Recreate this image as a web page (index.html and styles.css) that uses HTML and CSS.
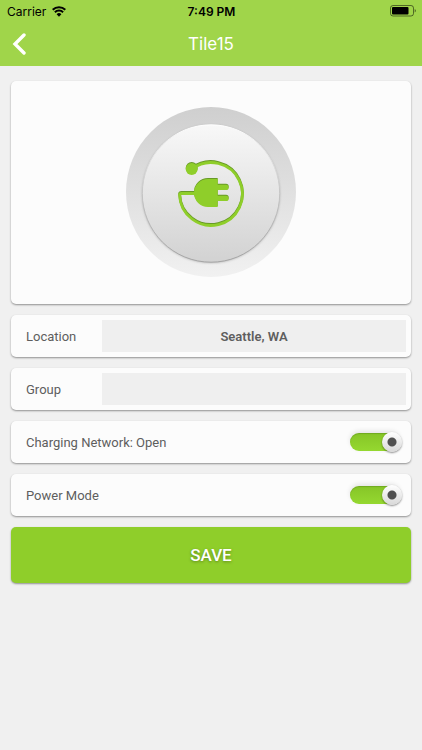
FILE: index.html
```html
<!DOCTYPE html>
<html lang="en">
<head>
<meta charset="utf-8">
<meta name="viewport" content="width=device-width, initial-scale=1">
<title>Tile15</title>
<link rel="stylesheet" href="styles.css">
</head>
<body>
<header class="top">
  <div class="status">
    <div class="carrier">
      <span>Carrier</span>
      <svg class="wifi" width="14" height="11" viewBox="0 0 14 11" aria-hidden="true">
        <path d="M.7 3.800A8.900 8.900 0 0 1 13.300 3.800M2.900 6.300A5.800 5.800 0 0 1 11.100 6.300" fill="none" stroke="#000" stroke-width="2"/>
        <path d="M7 10.800 4.600 8.200A3.400 3.400 0 0 1 9.400 8.200Z"/>
      </svg>
    </div>
    <time class="clock">7:49 PM</time>
    <svg class="battery" width="26" height="12" viewBox="0 0 26 12" aria-label="Battery">
      <rect x=".5" y=".5" width="23" height="10.500" rx="2.500" fill="none" stroke="#000" stroke-opacity=".5"/>
      <rect x="2" y="2" width="16.500" height="7.500" rx="1"/>
      <path d="M24.700 4v3.600q1.200-.6 1.200-1.800T24.700 4Z" fill-opacity=".5"/>
    </svg>
  </div>
  <nav class="nav">
    <button class="back" type="button" aria-label="Back">
      <svg width="15" height="22" viewBox="0 0 15 22" aria-hidden="true"><path d="M12 2 3 11l9 9" fill="none" stroke="#fff" stroke-width="3.400" stroke-linecap="round" stroke-linejoin="miter"/></svg>
    </button>
    <h1 class="title">Tile15</h1>
  </nav>
</header>
<main>
  <form class="form">
    <section class="card hero">
      <button class="dial" type="button" aria-label="Tile icon">
        <svg width="170" height="172" viewBox="0 0 170 172" aria-hidden="true">
          <defs>
            <linearGradient id="rim" x2="0" y2="1"><stop stop-color="#cfcfcf"/><stop offset="1" stop-color="#f1f1f1"/></linearGradient>
            <linearGradient id="face" x2="0" y2="1"><stop stop-color="#f8f8f8"/><stop offset="1" stop-color="#d2d2d2"/></linearGradient>
            <linearGradient id="edge" x2="0" y2="1"><stop stop-color="#fff"/><stop offset=".5" stop-color="#c4c4c4"/><stop offset="1" stop-color="#a4a4a4"/></linearGradient>
            <filter id="soft" x="-10%" y="-10%" width="120%" height="120%"><feGaussianBlur stdDeviation="1"/></filter>
            <g id="plug">
              <path d="M66 61A31.400 31.400 0 1 1 53.600 87Q53.600 85.500 55.500 85.500H70" fill="none" stroke="currentColor" stroke-width="2.800"/>
              <circle cx="65.700" cy="61" r="6" fill="currentColor"/>
              <path d="M91.700 71V76.700H100A2.700 2.700 0 0 1 100 82.100H91.700V87.700H100A2.700 2.700 0 0 1 100 93.100H91.700V99H82A14 14 0 0 1 82 71Z" fill="currentColor"/>
            </g>
          </defs>
          <circle cx="85" cy="85" r="85" fill="url(#rim)"/>
          <circle cx="85" cy="87" r="69" fill="#999" opacity=".6" filter="url(#soft)"/>
          <circle cx="85" cy="86.500" r="68.700" fill="url(#face)" stroke="url(#edge)"/>
          <use href="#plug" class="plug-shade"/>
          <use href="#plug" class="plug" y="1"/>
        </svg>
      </button>
    </section>
    <div class="card row">
      <label class="name" for="location">Location</label>
      <input class="field" id="location" type="text" value="Seattle, WA">
    </div>
    <div class="card row">
      <label class="name" for="group">Group</label>
      <input class="field" id="group" type="text">
    </div>
    <div class="card row">
      <label class="wide" for="network">Charging Network: Open</label>
      <input class="toggle" id="network" type="checkbox" checked>
    </div>
    <div class="card row">
      <label class="wide" for="power">Power Mode</label>
      <input class="toggle" id="power" type="checkbox" checked>
    </div>
    <button class="save" type="button">SAVE</button>
  </form>
</main>
</body>
</html>
```
FILE: styles.css
```css
* { box-sizing: border-box; }

body {
  margin: 0;
  background: #f0f0f0;
  color: #5e5e5e;
  font-family: Roboto, "Liberation Sans", sans-serif;
  font-size: 13px;
}

button, input { font: inherit; color: inherit; }

button {
  padding: 0;
  border: 0;
  background: none;
  cursor: pointer;
}

svg { display: block; }

.top {
  background: #a0d54a;
  font-family: Inter, "Liberation Sans", sans-serif;
}

.status {
  display: grid;
  grid-template-columns: 1fr auto 1fr;
  align-items: center;
  height: 22px;
  padding: 0 6px 0 7px;
  color: #000;
  font-size: 12px;
}

.carrier {
  display: flex;
  align-items: center;
  gap: 6px;
}

.clock { font-weight: 600; }

.battery { justify-self: end; }

.nav {
  display: grid;
  grid-template-columns: 32px 1fr 32px;
  align-items: center;
  height: 44px;
  padding: 0 12px;
}

.title {
  margin: 0;
  color: #fff;
  font-size: 17px;
  font-weight: 400;
  text-align: center;
}

.form {
  display: flex;
  flex-direction: column;
  gap: 11px;
  padding: 15px 11px;
}

.card {
  background: #fcfcfc;
  border-radius: 5px;
  box-shadow: 0 1px 2px rgba(0, 0, 0, .4);
}

.hero {
  display: flex;
  justify-content: center;
  padding: 26px 0 25px;
}

.dial { border-radius: 50%; }

.plug-shade { color: #689a26; }

.plug { color: #8fce2a; }

.row {
  display: flex;
  align-items: center;
  height: 42px;
  padding: 5px 5px 5px 15px;
}

.name { width: 76px; }

.wide { flex: 1; }

.field {
  flex: 1;
  min-width: 0;
  height: 100%;
  padding: 0 8px;
  border: 0;
  border-radius: 0;
  background: #efefef;
  font-weight: 600;
  text-align: center;
}

.toggle {
  appearance: none;
  position: relative;
  width: 50px;
  height: 18px;
  margin: 0 6px 0 0;
  border-radius: 9px;
  background: linear-gradient(#86c527, #95d830);
  box-shadow: inset 0 1px 1px rgba(80, 130, 20, .4), 0 -2px 5px rgba(0, 0, 0, .1);
  cursor: pointer;
}

.toggle::after {
  content: "";
  position: absolute;
  top: -1px;
  left: 0;
  width: 20px;
  height: 20px;
  border-radius: 50%;
  background: radial-gradient(circle, #505050 4px, transparent 5px), linear-gradient(#fff, #d8d8d8);
  box-shadow: 0 1px 2px rgba(0, 0, 0, .45);
}

.toggle:checked::after { left: 32px; }

.save {
  height: 56px;
  border-radius: 5px;
  background: #8fce2a;
  box-shadow: 0 1px 2px rgba(0, 0, 0, .4);
  color: #fff;
  font-size: 17px;
  font-weight: 500;
  text-shadow: 0 1px 3px rgba(0, 0, 0, .35);
}
```
